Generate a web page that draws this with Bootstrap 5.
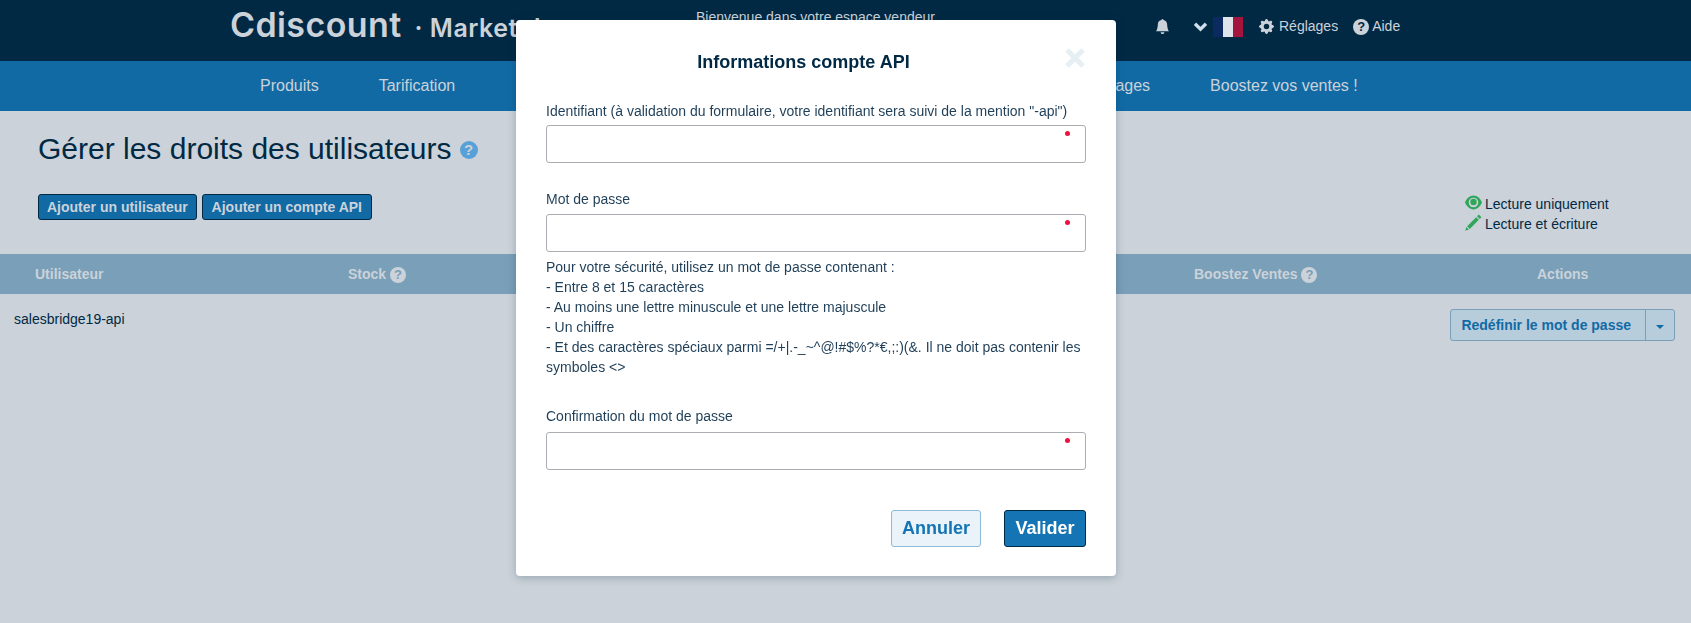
<!DOCTYPE html>
<html lang="fr">

<head>
  <meta charset="UTF-8">
  <meta name="viewport" content="width=device-width, initial-scale=1.0">
  <title>Gérer les droits des utilisateurs</title>
  <link rel="stylesheet" href="https://cdn.jsdelivr.net/npm/bootstrap@5.3.2/dist/css/bootstrap.min.css">
  <style>
    body {
      background: #cbd2d9;
      color: #012944;
      font-family: "Liberation Sans", Arial, sans-serif;
      font-size: 14px;
      min-height: 623px;
      overflow: hidden;
    }

    .top-strip {
      height: 61px;
      background: #012944;
      color: #cbd2d9;
    }

    .logo-main {
      width: 696px;
      padding: 5px 0 0 230px;
      white-space: nowrap;
      font-family: Inter, sans-serif;
      font-weight: 600;
      font-size: 34px;
      line-height: 40px;
      letter-spacing: .4px;
    }

    .logo-sub {
      font-size: 25px;
      margin-left: 4px;
      letter-spacing: .5px;
    }

    .welcome {
      width: 239px;
      padding-top: 7px;
      white-space: nowrap;
    }

    .top-tools {
      height: 21px;
      margin: 16px 0 0 220px;
    }

    .top-tools svg {
      display: block;
      fill: #cbd2d9;
    }

    .bell-icon {
      margin-right: 23px;
    }

    .fr-flag {
      width: 30px;
      height: 20px;
      margin: 0 16px 0 5px;
      background: linear-gradient(90deg, #0b2a5f 33%, #dfe3ea 33%, #dfe3ea 66%, #a3153c 66%);
    }

    .tool-text {
      margin-left: 5px;
    }

    .main-menu {
      height: 50px;
      padding-left: 230px;
      background: #126aa5;
    }

    .main-menu .nav-link {
      padding: 0 30px;
      color: #cbd2d9;
      font-size: 16px;
      line-height: 50px;
    }

    .menu-gap {
      width: 562px;
    }

    .page-title {
      margin: 22px 0 0 38px;
      font-size: 30px;
      line-height: 32px;
      font-weight: 400;
      color: #012944;
    }

    .qmark {
      display: inline-flex;
      align-items: center;
      justify-content: center;
      width: 16px;
      height: 16px;
      border-radius: 50%;
      background: #cbd2d9;
      color: #7a9fb8;
      font-size: 13px;
      font-weight: 700;
      line-height: 1;
      vertical-align: 0;
    }

    .top-help {
      margin: 0 3px 0 15px;
      color: #012944;
    }

    .title-help {
      width: 18px;
      height: 18px;
      margin-left: 8px;
      background: #58a0d8;
      color: #cbd2d9;
      font-size: 15px;
      vertical-align: 4px;
    }

    .tool-row {
      height: 66px;
      padding: 29px 0 0 38px;
    }

    .btn-dark-blue {
      padding: 0 8px;
      height: 26px;
      background: #126aa5;
      border: 1px solid #012944;
      border-radius: 3px;
      color: #cbd2d9;
      font-size: 14px;
      font-weight: 700;
      line-height: 24px;
    }

    .btn-api {
      width: 170px;
      margin-left: 5px;
      padding: 0;
    }

    .legend-box {
      margin-left: auto;
      width: 226px;
      line-height: 20px;
    }

    .legend-box svg {
      width: 17px;
      height: 17px;
      margin-right: 3px;
      fill: #2fa65a;
      vertical-align: -2px;
    }

    .table-head {
      height: 40px;
      margin-top: 23px;
      background: #7a9fb8;
      color: #cbd2d9;
      font-weight: 700;
      line-height: 40px;
      display: grid;
      grid-template-columns: 313px 846px 343px 1fr;
      padding-left: 35px;
    }

    .user-row {
      padding: 15px 16px 0 14px;
    }

    .btn-reset,
    .btn-reset:hover {
      height: 32px;
      padding: 0 14px 0 10px;
      background: #b8cddc;
      border: 1px solid #7a9fb8;
      border-radius: 3px;
      color: #126aa5;
      font-size: 14px;
      font-weight: 700;
      line-height: 30px;
    }

    .btn-caret,
    .btn-caret:hover {
      width: 30px;
      height: 32px;
      padding: 0;
      background: #b8cddc;
      border: 1px solid #7a9fb8;
      border-radius: 3px;
      color: #126aa5;
    }

    .btn-caret::after {
      margin-left: 0;
      border-top-width: 4px;
      border-right-width: 4px;
      border-left-width: 4px;
      vertical-align: 1px;
    }

    .account-dialog {
      width: 600px;
      max-width: none;
      margin: 20px 0 0 516px;
    }

    .account-box {
      height: 556px;
      padding: 0 30px;
      border: 0;
      border-radius: 4px;
      box-shadow: 0 2px 8px rgba(1, 41, 68, .25);
      color: #1f3f58;
    }

    .account-title {
      height: 81px;
      padding: 31px 25px 0 0;
      text-align: center;
      color: #012944;
      font-size: 18px;
      font-weight: 700;
      line-height: 22px;
    }

    .close-x {
      position: absolute;
      top: 28px;
      right: 31px;
      width: 20px;
      height: 20px;
      padding: 0;
      border: 0;
      background: none;
    }

    .close-x svg {
      display: block;
    }

    .field-label {
      display: block;
      margin: 0 0 4px;
      line-height: 20px;
      white-space: nowrap;
    }

    .label-pass {
      margin-top: 26px;
      margin-bottom: 5px;
    }

    .label-confirm {
      margin-top: 29px;
      margin-bottom: 6px;
    }

    .field-box {
      position: relative;
    }

    .field-box .form-control {
      height: 38px;
      padding: 0 8px;
      border: 1px solid #aaaeb2;
      border-radius: 3px;
    }

    .req-dot {
      position: absolute;
      top: 6px;
      right: 16px;
      width: 5px;
      height: 5px;
      border-radius: 50%;
      background: #f0103f;
    }

    .hint-text {
      margin: 5px 0 0;
      line-height: 20px;
    }

    .modal-actions {
      margin-top: 40px;
      gap: 23px;
    }

    .btn-cancel,
    .btn-cancel:hover {
      width: 90px;
      height: 37px;
      padding: 0;
      background: #eaf3f9;
      border: 1px solid #8dbbd8;
      border-radius: 3px;
      color: #1474b4;
      font-size: 18px;
      font-weight: 700;
    }

    .btn-ok,
    .btn-ok:hover {
      width: 82px;
      height: 37px;
      padding: 0;
      background: #1474b4;
      border: 1px solid #012944;
      border-radius: 3px;
      color: #fff;
      font-size: 18px;
      font-weight: 700;
    }
  </style>
</head>

<body>
  <header class="top-strip d-flex">
    <div class="logo-main">Cdiscount <span class="logo-sub">· Marketplace</span></div>
    <div class="welcome">Bienvenue dans votre espace vendeur</div>
    <div class="top-tools d-flex align-items-center">
      <svg class="bell-icon" width="15" height="17" viewBox="0 0 16 16"><path d="M8 16a2 2 0 0 0 2-2H6a2 2 0 0 0 2 2zm.995-14.901a1 1 0 1 0-1.99 0A5.002 5.002 0 0 0 3 6c0 1.098-.5 6-2 7h14c-1.5-1-2-5.902-2-7 0-2.42-1.72-4.44-4.005-4.901z"/></svg>
      <svg width="15" height="11" viewBox="0 0 16 12"><polyline points="2,3 8,9 14,3" fill="none" stroke="#cfe0ec" stroke-width="3.6"/></svg>
      <div class="fr-flag"></div>
      <svg width="15" height="15" viewBox="0 0 16 16"><path d="M9.405 1.05c-.413-1.4-2.397-1.4-2.81 0l-.1.34a1.464 1.464 0 0 1-2.105.872l-.31-.17c-1.283-.698-2.686.705-1.987 1.987l.169.311c.446.82.023 1.841-.872 2.105l-.34.1c-1.4.413-1.4 2.397 0 2.81l.34.1a1.464 1.464 0 0 1 .872 2.105l-.17.31c-.698 1.283.705 2.686 1.987 1.987l.311-.169a1.464 1.464 0 0 1 2.105.872l.1.34c.413 1.4 2.397 1.4 2.81 0l.1-.34a1.464 1.464 0 0 1 2.105-.872l.31.17c1.283.698 2.686-.705 1.987-1.987l-.169-.311a1.464 1.464 0 0 1 .872-2.105l.34-.1c1.4-.413 1.4-2.397 0-2.81l-.34-.1a1.464 1.464 0 0 1-.872-2.105l.17-.31c.698-1.283-.705-2.686-1.987-1.987l-.311.169a1.464 1.464 0 0 1-2.105-.872l-.1-.34zM8 10.93a2.929 2.929 0 1 1 0-5.86 2.929 2.929 0 0 1 0 5.858z"/></svg>
      <span class="tool-text">Réglages</span>
      <span class="qmark top-help">?</span>
      <span>Aide</span>
    </div>
  </header>

  <nav class="main-menu nav">
    <a class="nav-link" href="#">Produits</a>
    <a class="nav-link" href="#">Tarification</a>
    <div class="menu-gap"></div>
    <a class="nav-link" href="#">Messages</a>
    <a class="nav-link" href="#">Boostez vos ventes !</a>
  </nav>

  <h1 class="page-title">Gérer les droits des utilisateurs<span class="qmark title-help">?</span></h1>

  <div class="tool-row d-flex">
    <button class="btn btn-dark-blue" type="button">Ajouter un utilisateur</button>
    <button class="btn btn-dark-blue btn-api" type="button">Ajouter un compte API</button>
    <div class="legend-box">
      <div><svg viewBox="0 0 16 16"><path d="M8 1.500C4.400 1.500 1.400 4.500 0 8c1.400 3.500 4.400 6.500 8 6.500s6.600-3 8-6.500c-1.400-3.500-4.400-6.500-8-6.500zm0 11A4.500 4.500 0 1 1 8 3.500a4.500 4.500 0 0 1 0 9z"/><circle cx="8" cy="7.500" r="3"/></svg>Lecture uniquement</div>
      <div><svg viewBox="0 0 16 16"><path d="M13 .500l2.500 2.500-1.700 1.700-2.500-2.500zM10.500 3l2.500 2.500-8.500 8.500-2.500-2.500zM1.300 12.300l2.400 2.400-3.500 1.100z"/></svg>Lecture et écriture</div>
    </div>
  </div>

  <div class="table-head">
    <div>Utilisateur</div>
    <div>Stock <span class="qmark">?</span></div>
    <div>Boostez Ventes <span class="qmark">?</span></div>
    <div>Actions</div>
  </div>

  <div class="user-row d-flex justify-content-between">
    <span>salesbridge19-api</span>
    <div class="btn-group">
      <button class="btn btn-reset" type="button">Redéfinir le mot de passe</button>
      <button class="btn btn-caret dropdown-toggle" type="button" aria-label="Plus"></button>
    </div>
  </div>

  <div class="modal d-block">
    <div class="modal-dialog account-dialog">
      <div class="modal-content account-box">
        <div class="account-title">Informations compte API</div>
        <button class="close-x" type="button" aria-label="Fermer">
          <svg width="20" height="20" viewBox="0 0 20 20"><path d="M2 2l16 16M18 2L2 18" stroke="#e6eff3" stroke-width="5"/></svg>
        </button>
        <label class="field-label">Identifiant (à validation du formulaire, votre identifiant sera suivi de la mention "-api")</label>
        <div class="field-box"><input class="form-control" type="text"><span class="req-dot"></span></div>
        <label class="field-label label-pass">Mot de passe</label>
        <div class="field-box"><input class="form-control" type="password"><span class="req-dot"></span></div>
        <p class="hint-text">Pour votre sécurité, utilisez un mot de passe contenant :<br>- Entre 8 et 15 caractères<br>- Au moins une lettre minuscule et une lettre majuscule<br>- Un chiffre<br>- Et des caractères spéciaux parmi =/+|.-_~^@!#$%?*€,;:)(&amp;. Il ne doit pas contenir les symboles &lt;&gt;</p>
        <label class="field-label label-confirm">Confirmation du mot de passe</label>
        <div class="field-box"><input class="form-control" type="password"><span class="req-dot"></span></div>
        <div class="modal-actions d-flex justify-content-end">
          <button class="btn btn-cancel" type="button">Annuler</button>
          <button class="btn btn-ok" type="button">Valider</button>
        </div>
      </div>
    </div>
  </div>

  <script src="https://cdn.jsdelivr.net/npm/bootstrap@5.3.2/dist/js/bootstrap.bundle.min.js"></script>
</body>

</html>
